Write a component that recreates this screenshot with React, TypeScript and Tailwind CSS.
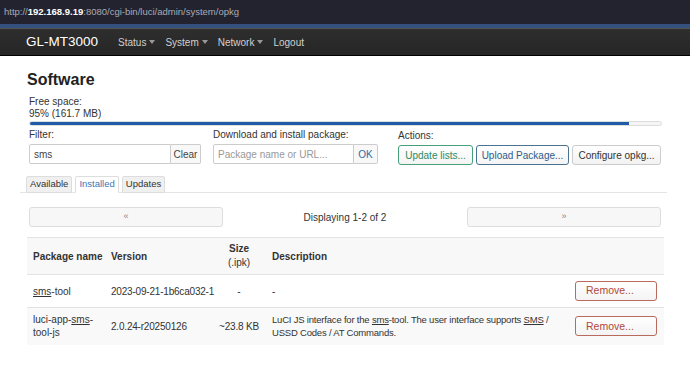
const navItems = ['Status', 'System', 'Network']

function Caret() {
  return <span className="ml-[3px] inline-block border-x-[3px] border-t-[4px] border-x-transparent border-t-[#999] align-middle" />
}

function PagerButton({ label }: { label: string }) {
  return (
    <button className="h-[20px] w-[194px] rounded-[3px] border border-[#ddd] bg-[#f7f7f7] text-[9px] text-[#888]">
      {label}
    </button>
  )
}

function RemoveButton() {
  return (
    <button className="h-[20px] w-[82px] rounded-[3px] border border-[#b86a5c] bg-gradient-to-b from-white to-[#f4f4f4] pl-[10px] text-left text-[10.5px] text-[#b0473a]">
      Remove...
    </button>
  )
}

export default function App() {
  return (
    <div className="h-[379px] w-[690px] overflow-hidden bg-white font-['Liberation_Sans',Arial,sans-serif] text-[10px] text-[#333]">
      {/* browser address bar */}
      <div className="flex h-[24px] items-center bg-[#22232f] pl-[4px] text-[9.5px] text-[#a9abb5]">
        <span>http://</span>
        <span className="font-bold text-white">192.168.9.19</span>
        <span>:8080/cgi-bin/luci/admin/system/opkg</span>
      </div>
      <div className="h-[4px] bg-[#34507e]" />
      <div className="h-[1px] bg-[#555]" />

      {/* LuCI header */}
      <div className="flex h-[26px] items-center bg-gradient-to-b from-[#2e2e2e] to-[#262626] pl-[26px]">
        <span className="mr-[20px] text-[13.5px] text-white">GL-MT3000</span>
        {navItems.map(item => (
          <span key={item} className="mr-[10px] flex items-center text-[10px] text-[#d0d0d0]">
            {item}
            <Caret />
          </span>
        ))}
        <span className="text-[10px] text-[#d0d0d0]">Logout</span>
      </div>
      <div className="h-[1px] bg-black" />

      <div className="pl-[27px] pr-[26px]">
        <h2 className="mt-[13px] mb-[6px] text-[16px] font-bold leading-[21px] text-[#222]">Software</h2>

        <div className="pl-[2px] leading-[12px]">
          <div>Free space:</div>
          <div>95% (161.7 MB)</div>
          <div className="mt-[1px] h-[5px] w-[633px] overflow-hidden rounded-[3px] border border-[#ddd] bg-[#f5f5f5]">
            <div className="h-full w-[95%] bg-[#1f5ba8]" />
          </div>
        </div>

        {/* controls */}
        <div className="mt-[2px] flex pl-[2px]">
          <div className="w-[184px]">
            <div className="mb-[3px] leading-[13px]">Filter:</div>
            <div className="flex h-[20px]">
              <div className="flex w-[142px] items-center rounded-l-[2px] border border-[#ccc] pl-[4px] text-[#444]">sms</div>
              <button className="w-[30px] rounded-r-[2px] border border-l-0 border-[#ccc] bg-[#f8f8f8] text-[#444]">Clear</button>
            </div>
          </div>
          <div className="w-[185px]">
            <div className="mb-[3px] leading-[13px]">Download and install package:</div>
            <div className="flex h-[20px]">
              <div className="flex w-[141px] items-center rounded-l-[2px] border border-[#ccc] pl-[4px] text-[#999]">Package name or URL...</div>
              <button className="w-[24px] rounded-r-[2px] border border-l-0 border-[#ccc] bg-[#f8f8f8] text-[#2f6aa3]">OK</button>
            </div>
          </div>
          <div>
            <div className="mb-[3px] mt-[1px] leading-[13px]">Actions:</div>
            <div className="flex h-[20px] gap-[3px] whitespace-nowrap">
              <button className="w-[75px] rounded-[3px] border border-[#45a07a] bg-gradient-to-b from-white to-[#f4f4f4] text-[#2e8a5e]">Update lists...</button>
              <button className="w-[93px] rounded-[3px] border border-[#4b7391] bg-gradient-to-b from-white to-[#f4f4f4] text-[#2d5d8c]">Upload Package...</button>
              <button className="w-[89px] rounded-[3px] border border-[#ccc] bg-gradient-to-b from-white to-[#f2f2f2] text-[#333]">Configure opkg...</button>
            </div>
          </div>
        </div>

        {/* tabs */}
        <div className="-ml-[7px] mt-[11px] flex w-[647px] gap-[3px] border-b border-[#e5e5e5] pl-[6px] text-[9.5px]">
          <div className="-mb-[1px] flex h-[17px] items-center rounded-t-[2px] border border-[#ddd] bg-[#f0f0f0] px-[3px] text-[#333]">Available</div>
          <div className="-mb-[1px] flex h-[17px] items-center rounded-t-[2px] border border-[#ddd] border-b-white bg-white px-[3px] text-[#3a77b5]">Installed</div>
          <div className="-mb-[1px] flex h-[17px] items-center rounded-t-[2px] border border-[#ddd] bg-[#f0f0f0] px-[3px] text-[#333]">Updates</div>
        </div>

        {/* pager */}
        <div className="mt-[14px] flex items-center justify-between pl-[2px] pr-[3px]">
          <PagerButton label="«" />
          <span>Displaying 1-2 of 2</span>
          <PagerButton label="»" />
        </div>

        {/* table */}
        <table className="mt-[10px] w-[637px] table-fixed border-collapse text-left">
          <colgroup>
            <col className="w-[78px]" />
            <col className="w-[110px]" />
            <col className="w-[48px]" />
            <col className="w-[307px]" />
            <col className="w-[94px]" />
          </colgroup>
          <thead>
            <tr className="h-[37px] border-y border-[#e2e2e2] bg-[#f8f8f8] font-bold text-[#333]">
              <th className="whitespace-nowrap pl-[6px] align-middle">Package name</th>
              <th className="pl-[6px] align-middle">Version</th>
              <th className="text-center align-middle leading-[14px]">
                Size<br /><span className="font-normal">(.ipk)</span>
              </th>
              <th className="pl-[9px] align-middle">Description</th>
              <th />
            </tr>
          </thead>
          <tbody>
            <tr className="h-[33px] border-b border-[#e2e2e2]">
              <td className="pl-[6px]"><span className="underline">sms</span>-tool</td>
              <td className="whitespace-nowrap pl-[6px] tracking-[-0.2px]">2023-09-21-1b6ca032-1</td>
              <td className="text-center">-</td>
              <td className="pl-[9px]">-</td>
              <td className="pl-[5px]"><RemoveButton /></td>
            </tr>
            <tr className="h-[37px] bg-[#f9f9f9] leading-[13px]">
              <td className="pl-[6px]">luci-app-<span className="underline">sms</span>-<br />tool-js</td>
              <td className="whitespace-nowrap pl-[6px] tracking-[-0.2px]">2.0.24-r20250126</td>
              <td className="whitespace-nowrap text-center tracking-[-0.2px]">~23.8 KB</td>
              <td className="whitespace-nowrap pl-[9px] text-[9.5px] tracking-[-0.2px]">
                LuCI JS interface for the <span className="underline">sms</span>-tool. The user interface supports <span className="underline">SMS</span> /<br />
                USSD Codes / AT Commands.
              </td>
              <td className="pl-[5px]"><RemoveButton /></td>
            </tr>
          </tbody>
        </table>
      </div>
    </div>
  )
}
